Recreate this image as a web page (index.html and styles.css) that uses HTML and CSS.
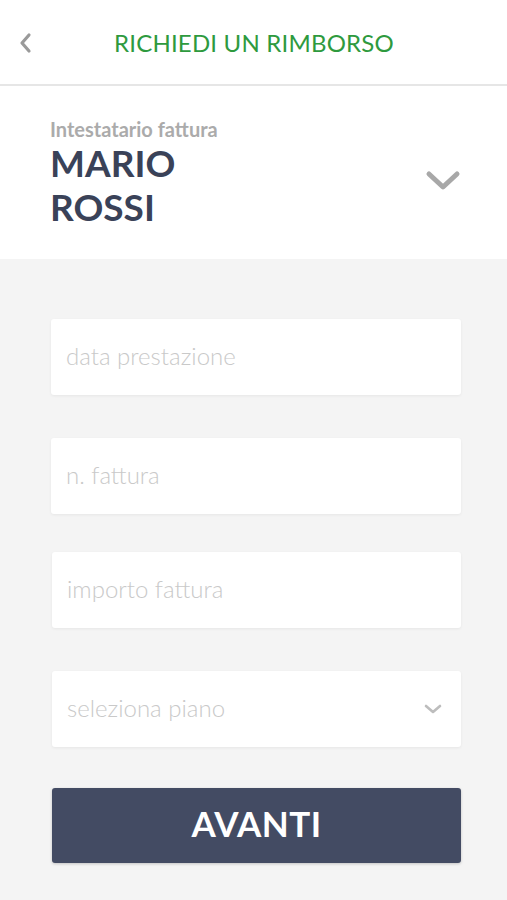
FILE: index.html
```html
<!DOCTYPE html>
<html lang="it">
<head>
<meta charset="utf-8">
<title>Richiedi un rimborso</title>
<link rel="stylesheet" href="styles.css">
</head>
<body>
<header class="topbar">
  <button class="back" aria-label="Indietro">
    <svg width="14" height="22" viewBox="0 0 14 22"><path d="M11 3 L4 11 L11 19" fill="none" stroke="#9a9a9a" stroke-width="3.2" stroke-linecap="round" stroke-linejoin="round"/></svg>
  </button>
  <h1 class="title">RICHIEDI UN RIMBORSO</h1>
</header>
<section class="holder">
  <div class="holder-text">
    <div class="holder-label">Intestatario fattura</div>
    <div class="holder-name">MARIO<br>ROSSI</div>
  </div>
  <svg class="holder-chev" width="36" height="22" viewBox="0 0 36 22"><path d="M4 4 L18 17 L32 4" fill="none" stroke="#a8a8a8" stroke-width="5" stroke-linecap="round" stroke-linejoin="round"/></svg>
</section>
<main class="form">
  <div class="field f1"><span class="ph">data prestazione</span></div>
  <div class="field f2"><span class="ph">n. fattura</span></div>
  <div class="field f3"><span class="ph">importo fattura</span></div>
  <div class="field f4"><span class="ph">seleziona piano</span>
    <svg class="field-chev" width="20" height="12" viewBox="0 0 20 12"><path d="M3 3 L10 9 L17 3" fill="none" stroke="#bdbdbd" stroke-width="2.6" stroke-linecap="round" stroke-linejoin="round"/></svg>
  </div>
  <button class="next">AVANTI</button>
</main>
</body>
</html>
```

FILE: styles.css
```css
* { box-sizing: border-box; }
html, body { margin: 0; padding: 0; }
body {
  font-family: Lato, "Open Sans", sans-serif;
  background: #f4f4f4;
  width: 507px;
  min-height: 900px;
}
.topbar {
  height: 86px;
  background: #fff;
  border-bottom: 2px solid #e6e6e6;
  display: flex;
  align-items: center;
  justify-content: center;
  position: relative;
}
.back {
  position: absolute;
  left: 18px;
  top: 32px;
  border: 0;
  background: none;
  padding: 0;
  display: flex;
}
.title {
  margin: 0;
  font-weight: 400;
  font-size: 24px;
  color: #2e9a3e;
  letter-spacing: 0.2px;
  padding-left: 1px;
}
.holder {
  background: #fff;
  height: 173px;
  display: flex;
  align-items: flex-start;
  justify-content: space-between;
  padding: 31px 46px 0 50px;
}
.holder-label {
  font-size: 20px;
  font-weight: 700;
  color: #ababab;
  line-height: 24px;
}
.holder-name {
  font-size: 37px;
  font-weight: 700;
  color: #3a4258;
  line-height: 44px;
  margin-top: 0;
}
.holder-chev {
  margin-top: 53px;
}
.form {
  padding: 60px 46px 0 51px;
  display: flex;
  flex-direction: column;
}
.field {
  height: 76px;
  background: #fff;
  border-radius: 3px;
  box-shadow: 0 1px 3px rgba(0,0,0,0.06);
  display: flex;
  align-items: center;
  justify-content: space-between;
  padding: 0 18px 0 15px;
}
.f2 { margin-top: 43px; }
.f3 { margin-top: 38px; margin-left: 1px; }
.f4 { margin-top: 43px; margin-left: 1px; }
.ph {
  font-size: 24px;
  font-weight: 300;
  color: #c9c9c9;
  margin-top: -3px;
}
.next {
  margin-top: 41px;
  margin-left: 1px;
  height: 75px;
  border: 0;
  border-radius: 3px;
  background: #434b63;
  color: #fff;
  font-family: Lato, sans-serif;
  font-weight: 700;
  font-size: 35px;
  letter-spacing: 0.5px;
  padding: 0 0 5px;
  box-shadow: 0 1px 3px rgba(0,0,0,0.2);
}
```
